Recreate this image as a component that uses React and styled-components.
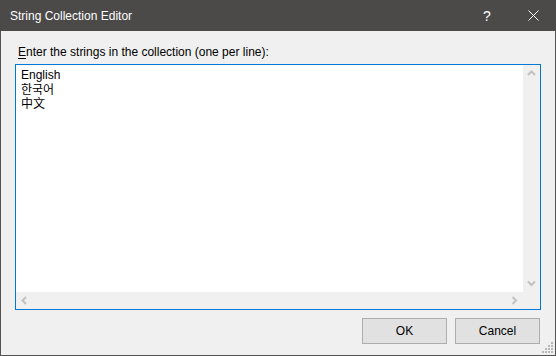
import React from 'react';
import styled, { createGlobalStyle } from 'styled-components';

const GlobalStyle = createGlobalStyle`
  html, body {
    margin: 0;
    padding: 0;
    background: #f0f0f0;
  }
  body {
    font-family: "Segoe UI", "Liberation Sans", "Noto Sans CJK KR", sans-serif;
    font-size: 12px;
  }
`;

const Window = styled.div`
  width: 556px;
  height: 356px;
  box-sizing: border-box;
  display: flex;
  flex-direction: column;
  background: #f0f0f0;
  border: 1px solid #545454;
  border-top: none;
  position: relative;
`;

const TitleBar = styled.div`
  height: 31px;
  margin: 0 -1px;
  background: #4b4a48;
  color: #ffffff;
  display: flex;
  align-items: center;
  padding-left: 10px;
  font-size: 12px;
  flex-shrink: 0;
`;

const Title = styled.span`
  flex: 1;
`;

const TitleButton = styled.div`
  width: 46px;
  height: 31px;
  display: flex;
  align-items: center;
  justify-content: center;
  color: #ffffff;
  font-size: 14px;
`;

const Body = styled.div`
  flex: 1;
  display: flex;
  flex-direction: column;
  padding: 13px 14px 12px 14px;
`;

const Label = styled.div`
  color: #000;
  height: 20px;
  padding-left: 3px;
  line-height: 16px;

  u {
    text-decoration: underline;
    text-underline-offset: 2px;
  }
`;

const TextArea = styled.div`
  width: 526px;
  height: 246px;
  box-sizing: border-box;
  border: 1px solid #0078d7;
  background: #ffffff;
  display: grid;
  grid-template-columns: 1fr 17px;
  grid-template-rows: 1fr 17px;
`;

const Lines = styled.div`
  padding: 3px 5px;
  color: #000;
`;

const Line = styled.div`
  height: 14px;
  line-height: 14px;
  font-family: ${p => p.cjk ? `"Noto Sans CJK ${p.cjk}", sans-serif` : 'inherit'};
  font-size: 12px;
  overflow: visible;
`;

const VScroll = styled.div`
  background: #f0f0f0;
  display: flex;
  flex-direction: column;
  justify-content: space-between;
  align-items: center;
  padding: 5px 0;
`;

const HScroll = styled.div`
  background: #f0f0f0;
  display: flex;
  justify-content: space-between;
  align-items: center;
  padding: 0 5px;
`;

const Corner = styled.div`
  background: #f0f0f0;
`;

const Buttons = styled.div`
  display: flex;
  justify-content: flex-end;
  gap: 8px;
  margin-top: 8px;
  padding-right: 1px;
`;

const Button = styled.div`
  width: 85px;
  height: 26px;
  box-sizing: border-box;
  border: 1px solid #adadad;
  background: #e1e1e1;
  display: flex;
  align-items: center;
  justify-content: center;
  color: #000;
`;

const Grip = styled.svg`
  position: absolute;
  right: 1px;
  bottom: 1px;
`;

const Chevron = ({ dir }) => {
  const paths = {
    up: 'M1 5 L4.5 1.5 L8 5',
    down: 'M1 1.5 L4.5 5 L8 1.5',
    left: 'M5 1 L1.5 4.5 L5 8',
    right: 'M1.5 1 L5 4.5 L1.5 8',
  };
  const vertical = dir === 'up' || dir === 'down';
  return (
    <svg width={vertical ? 9 : 7} height={vertical ? 7 : 9}>
      <path d={paths[dir]} fill="none" stroke="#c2c2c2" strokeWidth="2" />
    </svg>
  );
};

const App = () => {
  return (
    <>
      <GlobalStyle />
      <Window>
        <TitleBar>
          <Title>String Collection Editor</Title>
          <TitleButton>?</TitleButton>
          <TitleButton>
            <svg width="11" height="11">
              <path d="M0.5 0.5 L10.5 10.5 M10.5 0.5 L0.5 10.5" stroke="#fff" strokeWidth="1" />
            </svg>
          </TitleButton>
        </TitleBar>
        <Body>
          <Label><u>E</u>nter the strings in the collection (one per line):</Label>
          <TextArea>
            <Lines>
              <Line>English</Line>
              <Line cjk="KR">한국어</Line>
              <Line cjk="SC">中文</Line>
            </Lines>
            <VScroll>
              <Chevron dir="up" />
              <Chevron dir="down" />
            </VScroll>
            <HScroll>
              <Chevron dir="left" />
              <Chevron dir="right" />
            </HScroll>
            <Corner />
          </TextArea>
          <Buttons>
            <Button>OK</Button>
            <Button>Cancel</Button>
          </Buttons>
        </Body>
        <Grip width="12" height="12">
          {[[9, 0], [9, 3], [6, 3], [9, 6], [6, 6], [3, 6], [9, 9], [6, 9], [3, 9], [0, 9]].map(([x, y], i) => (
            <rect key={i} x={x} y={y} width="2" height="2" fill="#b8b8b8" />
          ))}
        </Grip>
      </Window>
    </>
  );
};

export default App;
